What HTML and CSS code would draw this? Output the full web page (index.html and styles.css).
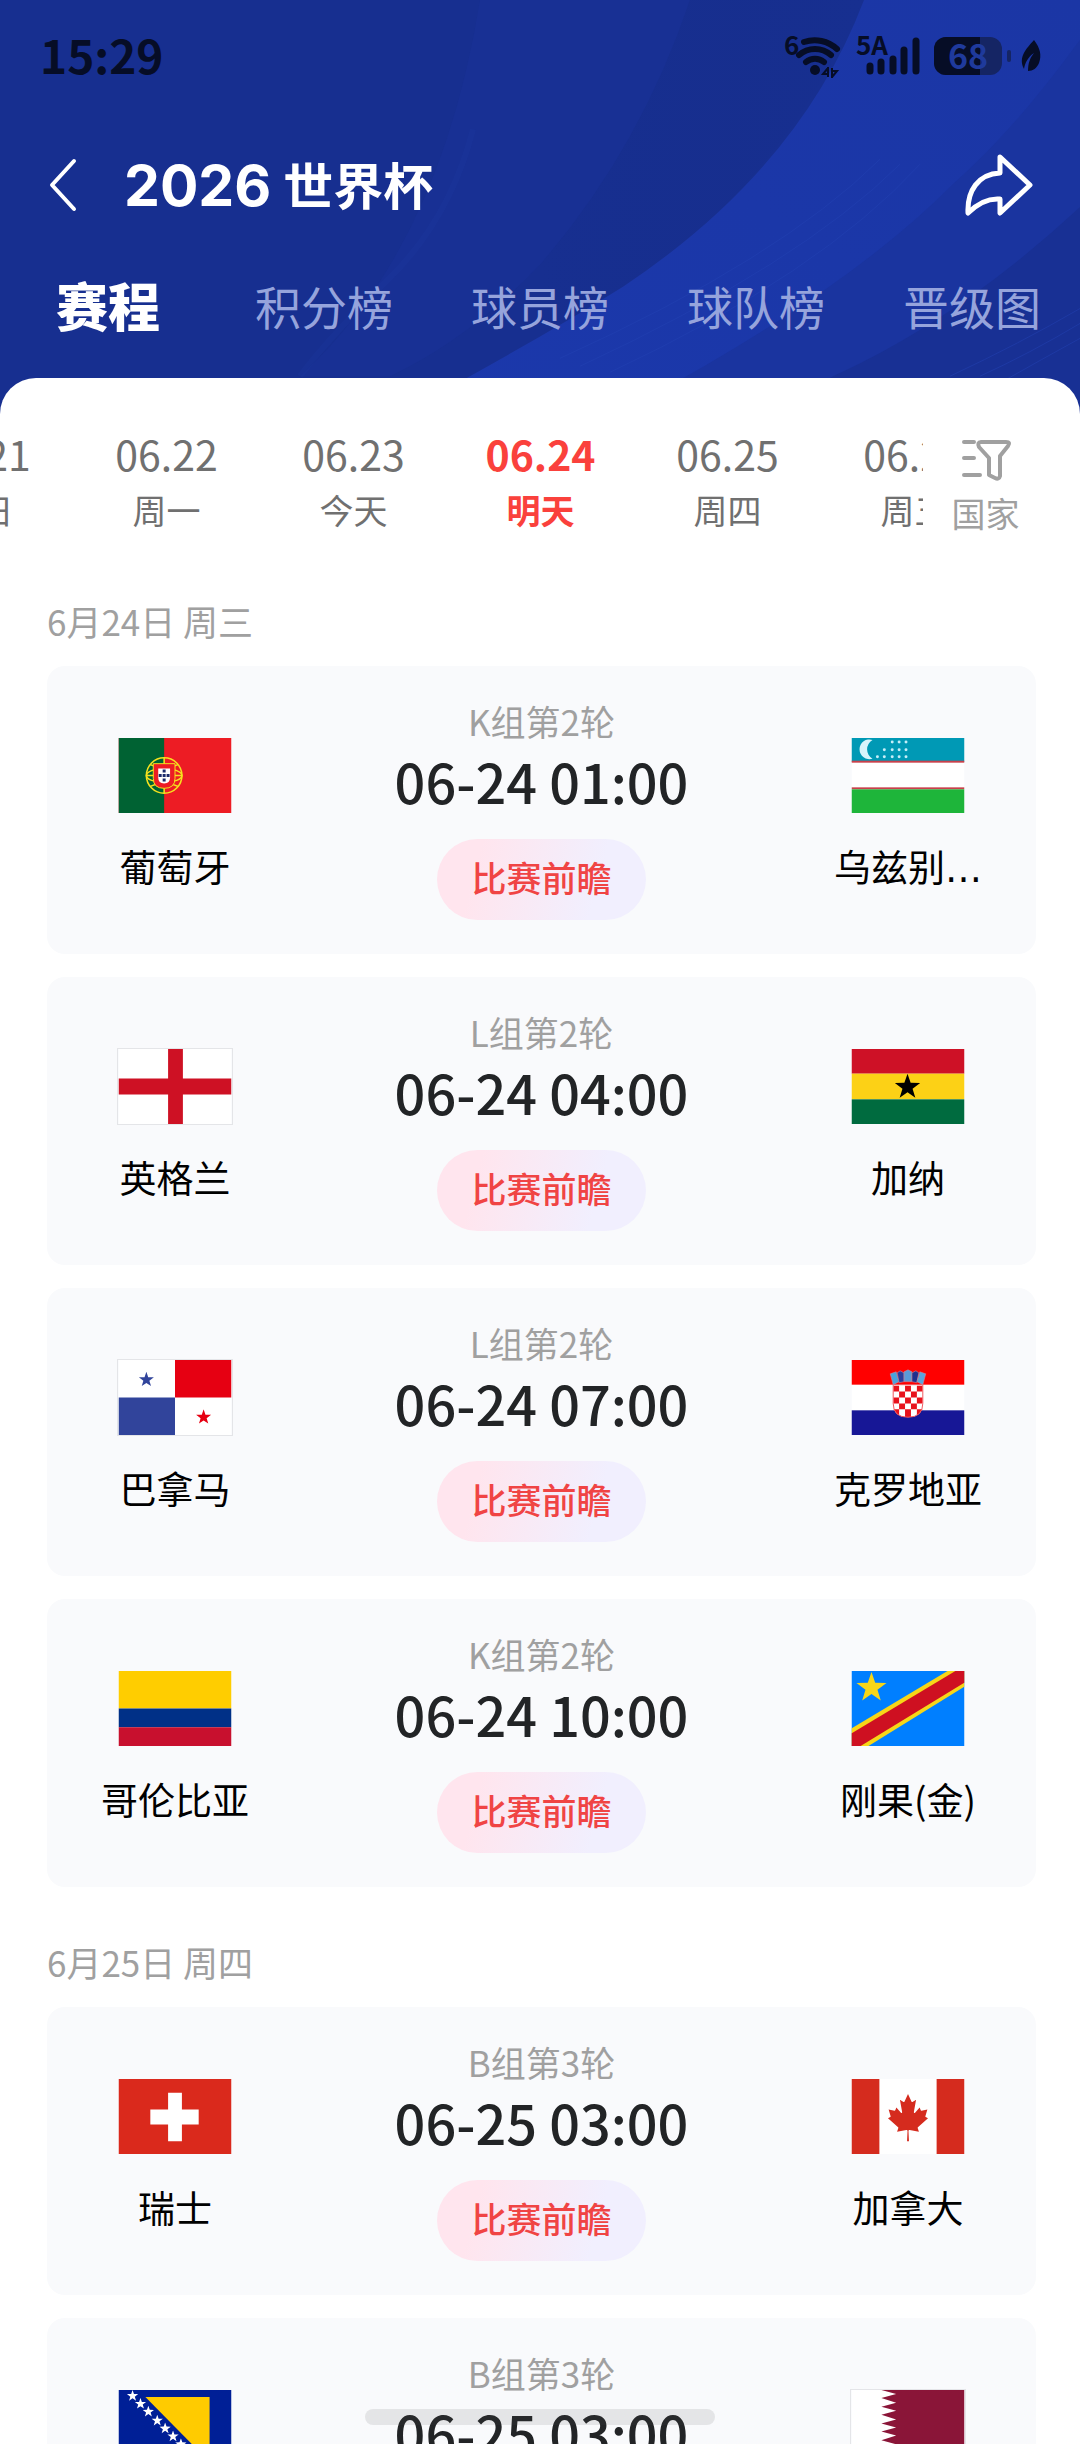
FILE: index.html
```
<!DOCTYPE html>
<html lang="zh-CN">
<head>
    <meta charset="UTF-8">
    <meta name="viewport" content="width=device-width, initial-scale=1.0">
    <title>2026 世界杯</title>
    <link rel="stylesheet" href="styles.css">
</head>
<body>
    <!-- Shared shapes -->
    <svg class="defs" width="0" height="0" aria-hidden="true">
        <symbol id="star" viewBox="-10 -10 20 20">
            <polygon points="0,-10 2.35,-3.24 9.51,-3.09 3.8,1.24 5.88,8.09 0,4 -5.88,8.09 -3.8,1.24 -9.51,-3.09 -2.35,-3.24"/>
        </symbol>
    </svg>

    <div class="app">
        <header class="header">
            <svg class="header-art" viewBox="0 0 1080 420" preserveAspectRatio="none" aria-hidden="true">
                <defs>
                    <linearGradient id="ribbon" x1="0" y1="1" x2="1" y2="0">
                        <stop offset="0" stop-color="#1b38ab"/>
                        <stop offset="1" stop-color="#1b36a5"/>
                    </linearGradient>
                    <linearGradient id="shade" x1="0" y1="0" x2="1" y2="0">
                        <stop offset="0" stop-color="#162d8a" stop-opacity="0"/>
                        <stop offset="1" stop-color="#172f90"/>
                    </linearGradient>
                </defs>
                <rect width="1080" height="420" fill="#172f90"/>
                <path d="M480 0H690Q640 150 540 266Q470 340 390 378H300Q440 250 480 0Z" fill="#1a3298" opacity=".5"/>
                <path d="M690 0Q640 150 540 266V345Q760 230 864 0Z" fill="url(#shade)"/>
                <path d="M473 130Q450 220 389 280T300 378" fill="none" stroke="#1e3ba6" stroke-width="6" opacity=".2"/>
                <path d="M864 0Q800 170 623 288Q540 340 430 400V420H1080V0Z" fill="url(#ribbon)"/>
                <path d="M1080 40Q1015 130 953 185Q850 290 640 404V420H1080Z" fill="#1a349f"/>
                <path d="M1080 208Q960 320 833 378L760 420H1080Z" fill="#183094"/>
                <g fill="none" stroke="#2342b4" stroke-width="1" opacity=".5">
                    <path d="M880 160Q780 260 560 360"/>
                    <path d="M900 165Q800 265 580 368"/>
                    <path d="M920 165Q820 275 610 374"/>
                    <path d="M1080 310Q1020 345 950 378"/>
                    <path d="M1080 325Q1030 355 980 378"/>
                    <path d="M1080 340Q1040 362 1005 382"/>
                </g>
            </svg>

            <div class="status-bar">
                <span class="status-time">15:29</span>
                <div class="status-icons">
                    <svg class="wifi" width="58" height="44" viewBox="0 0 58 44" role="img" aria-label="Wi-Fi 6">
                        <text x="0" y="20" class="status-mark">6</text>
                        <g fill="none" stroke="currentColor" stroke-width="6" stroke-linecap="round">
                            <path d="M20 7A33 33 0 0 1 53 14"/>
                            <path d="M15 20A24 24 0 0 1 47 20"/>
                            <path d="M22 27A14 14 0 0 1 40 27"/>
                        </g>
                        <circle cx="31" cy="35" r="5" fill="currentColor"/>
                        <path d="M44 32V42M44 33L39 39H44M48 43V33M48 42L53 36H48" fill="none" stroke="currentColor" stroke-width="2"/>
                    </svg>
                    <svg class="signal" width="64" height="44" viewBox="0 0 64 44" role="img" aria-label="5A">
                        <text x="0" y="20" class="status-mark">5A</text>
                        <g stroke="currentColor" stroke-width="7" stroke-linecap="round">
                            <path d="M14 31V36M25 27V36M37 24V36M48 15V36M60 6V36"/>
                        </g>
                    </svg>
                    <svg class="battery" width="78" height="44" viewBox="0 0 78 44" role="img" aria-label="68%">
                        <rect x="0" y="2" width="68" height="38" rx="12" fill="#152564"/>
                        <path d="M12 2H46V40H12A12 12 0 0 1 0 28V14A12 12 0 0 1 12 2Z" fill="currentColor"/>
                        <rect x="73" y="15" width="4" height="12" rx="2" fill="#152564"/>
                        <text x="34" y="34" text-anchor="middle" class="battery-level">68</text>
                    </svg>
                    <svg class="leaf" width="22" height="44" viewBox="0 0 22 44" aria-hidden="true">
                        <path d="M14 5C20 13 22 20 19 28C17 33 13 36 8 36C8 28 10 23 14 18C8 22 5 28 4 34C-2 22 6 14 14 5Z" fill="currentColor"/>
                    </svg>
                </div>
            </div>

            <div class="nav">
                <button class="icon-button" aria-label="返回">
                    <svg width="30" height="56" viewBox="0 0 30 56"><path d="M26 4L4 28L26 52" fill="none" stroke="#fff" stroke-width="4" stroke-linecap="round" stroke-linejoin="round"/></svg>
                </button>
                <h1 class="title"><span class="title-year">2026</span>世界杯</h1>
                <button class="icon-button share" aria-label="分享">
                    <svg width="70" height="64" viewBox="0 0 70 64"><path d="M36 4L66 32L36 60V46C24 45 14 50 4 60C3 38 14 21 36 20Z" fill="none" stroke="#fff" stroke-width="5" stroke-linejoin="round"/></svg>
                </button>
            </div>

            <nav class="tabs">
                <a class="tab active" href="#schedule">赛程</a>
                <a class="tab" href="#points">积分榜</a>
                <a class="tab" href="#players">球员榜</a>
                <a class="tab" href="#teams">球队榜</a>
                <a class="tab" href="#bracket">晋级图</a>
            </nav>
        </header>

        <main class="sheet" id="schedule">
            <div class="date-bar">
                <div class="date-strip">
                    <div class="dates">
                        <button class="date"><span>06.21</span><span class="weekday">周日</span></button>
                        <button class="date"><span>06.22</span><span class="weekday">周一</span></button>
                        <button class="date"><span>06.23</span><span class="weekday">今天</span></button>
                        <button class="date active"><span>06.24</span><span class="weekday">明天</span></button>
                        <button class="date"><span>06.25</span><span class="weekday">周四</span></button>
                        <button class="date"><span>06.26</span><span class="weekday">周五</span></button>
                    </div>
                </div>
                <button class="filter">
                    <svg width="52" height="44" viewBox="0 0 52 44" aria-hidden="true">
                        <g fill="none" stroke="#a0a0a0" stroke-width="4" stroke-linecap="round" stroke-linejoin="round">
                            <path d="M4 4H14M4 20H14M4 37H20"/>
                            <path d="M21 4H46Q51 4 48 8L40 18V38Q39 42 35 40L29 37V20L19 9Q17 4 21 4Z"/>
                        </g>
                    </svg>
                    <span>国家</span>
                </button>
            </div>

            <section class="day">
                <h2 class="day-title">6月24日 周三</h2>
                <div class="matches">
                    <article class="match">
                        <div class="team">
                            <svg class="flag" viewBox="0 0 114 76" aria-hidden="true">
                                <rect width="114" height="76" fill="#ed1c24"/>
                                <rect width="46" height="76" fill="#006233"/>
                                <g fill="none" stroke="#f5e11e" stroke-width="1.6">
                                    <circle cx="46" cy="38" r="18"/>
                                    <ellipse cx="46" cy="38" rx="18" ry="7"/>
                                    <path d="M46 20V56M28 38H64M32 27Q46 34 60 27M32 49Q46 42 60 49"/>
                                </g>
                                <path d="M35 26H57V41Q57 51 46 51T35 41Z" fill="#ed1c24" stroke="#f5e11e" stroke-width="1"/>
                                <path d="M40 31H52V40Q52 46 46 46T40 40Z" fill="#fff"/>
                                <path d="M44.5 32h3v3h-3zM44.5 36.5h3v3h-3zM44.5 41h3v3h-3zM40.5 36.5h3v3h-3zM48.5 36.5h3v3h-3z" fill="#1b2a6b"/>
                            </svg>
                            <span class="team-name">葡萄牙</span>
                        </div>
                        <div class="info">
                            <span class="round">K组第2轮</span>
                            <time class="kickoff">06-24 01:00</time>
                            <button class="preview">比赛前瞻</button>
                        </div>
                        <div class="team">
                            <svg class="flag" viewBox="0 0 114 76" aria-hidden="true">
                                <rect width="114" height="76" fill="#fff"/>
                                <rect width="114" height="24" fill="#0099b5"/>
                                <rect y="23" width="114" height="2" fill="#c8414b"/>
                                <rect y="50" width="114" height="2" fill="#c8414b"/>
                                <rect y="52" width="114" height="24" fill="#1eb53a"/>
                                <path d="M21 2A10 10 0 1 0 21 21A11 11 0 0 1 21 2Z" fill="#d8f4fb"/>
                                <g fill="#c6eef8">
                                    <circle cx="41" cy="4" r="1.5"/><circle cx="48" cy="4" r="1.5"/><circle cx="55" cy="4" r="1.5"/>
                                    <circle cx="33" cy="12" r="1.5"/><circle cx="41" cy="12" r="1.5"/><circle cx="48" cy="12" r="1.5"/><circle cx="55" cy="12" r="1.5"/>
                                    <circle cx="26" cy="19" r="1.5"/><circle cx="33" cy="19" r="1.5"/><circle cx="41" cy="19" r="1.5"/><circle cx="48" cy="19" r="1.5"/><circle cx="55" cy="19" r="1.5"/>
                                </g>
                            </svg>
                            <span class="team-name">乌兹别<span class="dots">…</span></span>
                        </div>
                    </article>

                    <article class="match">
                        <div class="team">
                            <svg class="flag bordered" viewBox="0 0 114 76" aria-hidden="true">
                                <rect width="114" height="76" fill="#fff"/>
                                <path d="M50 0H65V30H114V46H65V76H50V46H0V30H50Z" fill="#ce1124"/>
                            </svg>
                            <span class="team-name">英格兰</span>
                        </div>
                        <div class="info">
                            <span class="round">L组第2轮</span>
                            <time class="kickoff">06-24 04:00</time>
                            <button class="preview">比赛前瞻</button>
                        </div>
                        <div class="team">
                            <svg class="flag" viewBox="0 0 114 76" aria-hidden="true">
                                <rect width="114" height="25" fill="#ce1126"/>
                                <rect y="25" width="114" height="26" fill="#fcd116"/>
                                <rect y="51" width="114" height="25" fill="#006b3f"/>
                                <use href="#star" x="43" y="25" width="27" height="27" fill="#000"/>
                            </svg>
                            <span class="team-name">加纳</span>
                        </div>
                    </article>

                    <article class="match">
                        <div class="team">
                            <svg class="flag bordered" viewBox="0 0 114 76" aria-hidden="true">
                                <rect width="114" height="76" fill="#fff"/>
                                <rect x="57" width="57" height="38" fill="#e60012"/>
                                <rect y="38" width="57" height="38" fill="#31449b"/>
                                <use href="#star" x="20" y="12" width="16" height="16" fill="#31449b"/>
                                <use href="#star" x="78" y="50" width="16" height="16" fill="#e60012"/>
                            </svg>
                            <span class="team-name">巴拿马</span>
                        </div>
                        <div class="info">
                            <span class="round">L组第2轮</span>
                            <time class="kickoff">06-24 07:00</time>
                            <button class="preview">比赛前瞻</button>
                        </div>
                        <div class="team">
                            <svg class="flag" viewBox="0 0 114 76" aria-hidden="true">
                                <rect width="114" height="76" fill="#fff"/>
                                <rect width="114" height="25" fill="#f00"/>
                                <rect y="51" width="114" height="25" fill="#171796"/>
                                <clipPath id="shield"><path d="M42 25H72V44Q72 58 57 58T42 44Z"/></clipPath>
                                <g clip-path="url(#shield)">
                                    <rect x="42" y="25" width="30" height="34" fill="#fff"/>
                                    <path d="M42 26h6v6h-6zM54 26h6v6h-6zM66 26h6v6h-6zM48 32h6v6h-6zM60 32h6v6h-6zM42 38h6v6h-6zM54 38h6v6h-6zM66 38h6v6h-6zM48 44h6v6h-6zM60 44h6v6h-6zM42 50h6v6h-6zM54 50h6v8h-6zM66 50h6v6h-6z" fill="#e8121c"/>
                                </g>
                                <path d="M42 25H72V44Q72 58 57 58T42 44Z" fill="none" stroke="#f2555c" stroke-width="1"/>
                                <g stroke="#c9899a" stroke-width=".6">
                                    <path d="M39 14L45 12L48 22L42 25Z" fill="#4aa3dc"/>
                                    <path d="M46 13L49 11L53 13V22L48 23Z" fill="#2b3c9c"/>
                                    <path d="M53 12L57 10L61 12V22H53Z" fill="#5a9bd8"/>
                                    <path d="M61 13L65 11L68 13L66 23L61 22Z" fill="#1f2f8e"/>
                                    <path d="M69 12L75 14L72 25L66 22Z" fill="#5aa5dc"/>
                                </g>
                            </svg>
                            <span class="team-name">克罗地亚</span>
                        </div>
                    </article>

                    <article class="match">
                        <div class="team">
                            <svg class="flag" viewBox="0 0 114 76" aria-hidden="true">
                                <rect width="114" height="38" fill="#ffcd00"/>
                                <rect y="38" width="114" height="19" fill="#003087"/>
                                <rect y="57" width="114" height="19" fill="#c8102e"/>
                            </svg>
                            <span class="team-name">哥伦比亚</span>
                        </div>
                        <div class="info">
                            <span class="round">K组第2轮</span>
                            <time class="kickoff">06-24 10:00</time>
                            <button class="preview">比赛前瞻</button>
                        </div>
                        <div class="team">
                            <svg class="flag" viewBox="0 0 114 76" aria-hidden="true">
                                <rect width="114" height="76" fill="#007fff"/>
                                <path d="M0 58L97 0H114V16L17 76H0Z" fill="#f7d618"/>
                                <path d="M0 63L105 0H114V12L9 76H0Z" fill="#ce1021"/>
                                <use href="#star" x="4" y="1" width="32" height="32" fill="#f7d618"/>
                            </svg>
                            <span class="team-name">刚果(金)</span>
                        </div>
                    </article>
                </div>
            </section>

            <section class="day">
                <h2 class="day-title">6月25日 周四</h2>
                <div class="matches">
                    <article class="match">
                        <div class="team">
                            <svg class="flag" viewBox="0 0 114 76" aria-hidden="true">
                                <rect width="114" height="76" fill="#da291c"/>
                                <path d="M50 14H64V31H81V46H64V63H50V46H32V31H50Z" fill="#fff"/>
                            </svg>
                            <span class="team-name">瑞士</span>
                        </div>
                        <div class="info">
                            <span class="round">B组第3轮</span>
                            <time class="kickoff">06-25 03:00</time>
                            <button class="preview">比赛前瞻</button>
                        </div>
                        <div class="team">
                            <svg class="flag" viewBox="0 0 114 76" aria-hidden="true">
                                <rect width="114" height="76" fill="#fff"/>
                                <rect width="28" height="76" fill="#d52b1e"/>
                                <rect x="86" width="28" height="76" fill="#d52b1e"/>
                                <path transform="translate(57 39) scale(.0109 .0119)" d="m-90 2030 45-863a95 95 0 0 0-111-98l-859 151 116-320a65 65 0 0 0-20-73l-941-762 212-99a65 65 0 0 0 34-79l-186-572 542 115a65 65 0 0 0 73-38l105-247 423 454a65 65 0 0 0 111-57l-204-1052 327 189a65 65 0 0 0 91-27l332-652 332 652a65 65 0 0 0 91 27l327-189-204 1052a65 65 0 0 0 111 57l423-454 105 247a65 65 0 0 0 73 38l542-115-186 572a65 65 0 0 0 34 79l212 99-941 762a65 65 0 0 0-20 73l116 320-859-151a95 95 0 0 0-111 98l45 863z" fill="#d52b1e"/>
                            </svg>
                            <span class="team-name">加拿大</span>
                        </div>
                    </article>

                    <article class="match">
                        <div class="team">
                            <svg class="flag" viewBox="0 0 114 76" aria-hidden="true">
                                <rect width="114" height="76" fill="#001f96"/>
                                <path d="M27 7H92V73Z" fill="#ffcb00"/>
                                <g fill="#fff">
                                    <use href="#star" x="8" y="0" width="12" height="12"/>
                                    <use href="#star" x="16" y="8" width="12" height="12"/>
                                    <use href="#star" x="24" y="16" width="12" height="12"/>
                                    <use href="#star" x="33" y="25" width="12" height="12"/>
                                    <use href="#star" x="41" y="33" width="12" height="12"/>
                                    <use href="#star" x="49" y="41" width="12" height="12"/>
                                    <use href="#star" x="57" y="49" width="12" height="12"/>
                                    <use href="#star" x="66" y="58" width="12" height="12"/>
                                </g>
                            </svg>
                            <span class="team-name">波黑</span>
                        </div>
                        <div class="info">
                            <span class="round">B组第3轮</span>
                            <time class="kickoff">06-25 03:00</time>
                            <button class="preview">比赛前瞻</button>
                        </div>
                        <div class="team">
                            <svg class="flag bordered" viewBox="0 0 114 76" aria-hidden="true">
                                <rect width="114" height="76" fill="#fff"/>
                                <path d="M114 0H30L45 4L30 8L45 13L30 17L45 21L30 25L45 30L30 34L45 38L30 42L45 46L30 51L45 55L30 59L45 63L30 68L45 72L30 76H114Z" fill="#8a1538"/>
                            </svg>
                            <span class="team-name">卡塔尔</span>
                        </div>
                    </article>
                </div>
            </section>
        </main>

        <div class="home-indicator"></div>
    </div>
</body>
</html>
```

FILE: styles.css
```
* {
    box-sizing: border-box;
}

body {
    margin: 0;
    font-family: "Noto Sans CJK SC", sans-serif;
    background: #fff;
    color: #000;
}

button {
    margin: 0;
    padding: 0;
    border: none;
    background: none;
    font: inherit;
    color: inherit;
    cursor: pointer;
}

svg {
    display: block;
}

.defs {
    position: absolute;
}

.app {
    display: flex;
    flex-direction: column;
    height: 100vh;
    overflow: hidden;
}

/* Header */
.header {
    position: relative;
    flex: none;
    padding-bottom: 66px;
    background: #172f90;
}

.header-art {
    position: absolute;
    inset: 0;
    width: 100%;
    height: 100%;
}

.status-bar,
.nav,
.tabs {
    position: relative;
    display: flex;
    align-items: center;
}

.status-bar {
    justify-content: space-between;
    height: 112px;
    padding: 0 38px 0 40px;
    color: #060d26;
}

.status-time {
    padding-bottom: 4px;
    font-size: 46px;
    font-weight: 700;
    line-height: 60px;
}

.status-icons {
    display: flex;
    align-items: center;
    gap: 14px;
    padding-top: 2px;
}

.status-icons svg {
    overflow: visible;
}

.status-mark {
    font-size: 26px;
    font-weight: 700;
    fill: currentColor;
}

.battery-level {
    font-size: 34px;
    font-weight: 700;
    fill: #1f3a9c;
}

.leaf {
    margin-left: -6px;
}

.nav {
    height: 146px;
    padding: 0 46px 0 48px;
}

.icon-button {
    flex: none;
}

.share {
    margin-left: auto;
}

.title {
    display: flex;
    align-items: center;
    gap: 12px;
    margin: 0 0 4px 46px;
    font-size: 50px;
    font-weight: 700;
    line-height: 60px;
    color: #fff;
}

.title-year {
    padding-top: 6px;
    font-family: Inter, sans-serif;
    font-size: 57px;
}

.tabs {
    height: 94px;
}

.tab {
    flex: 1;
    font-size: 46px;
    line-height: 60px;
    text-align: center;
    text-decoration: none;
    color: #96a4dc;
}

.tab.active {
    font-size: 52px;
    font-weight: 900;
    color: #fff;
}

/* Sheet */
.sheet {
    position: relative;
    flex: 1;
    min-height: 0;
    margin-top: -40px;
    padding-top: 50px;
    border-radius: 36px 36px 0 0;
    background: #fff;
    overflow: hidden;
}

.date-bar {
    display: flex;
    margin-bottom: 60px;
}

.date-strip {
    flex: 1;
    min-width: 0;
    overflow: hidden;
}

.dates {
    display: flex;
    margin-left: -114px;
}

.date {
    display: flex;
    flex: 0 0 187px;
    flex-direction: column;
    align-items: center;
    gap: 7px;
    font-size: 41px;
    line-height: 50px;
    color: #707070;
}

.weekday {
    font-size: 34px;
}

.date.active {
    font-weight: 700;
    color: #fa413c;
}

.filter {
    display: flex;
    flex: 0 0 157px;
    flex-direction: column;
    align-items: center;
    gap: 6px;
    padding: 10px 32px 0 0;
    font-size: 34px;
    line-height: 50px;
    color: #a0a0a0;
}

.day {
    margin-bottom: 52px;
    padding: 0 44px 0 47px;
}

.day-title {
    margin: 0 0 22px;
    font-size: 35px;
    font-weight: 400;
    line-height: 46px;
    color: #a0a0a0;
}

.matches {
    display: flex;
    flex-direction: column;
    gap: 23px;
}

.match {
    display: flex;
    padding: 31px 0 34px;
    border-radius: 18px;
    background: #f9fafc;
}

.team {
    display: flex;
    flex: 0 0 256px;
    flex-direction: column;
    align-items: center;
    gap: 28px;
    padding-top: 41px;
}

.flag {
    width: 114px;
    height: 75px;
}

.flag.bordered {
    outline: 1px solid #e4e5e8;
}

.team-name {
    font-size: 37px;
    line-height: 50px;
}

.dots {
    font-family: "DejaVu Sans", sans-serif;
}

.info {
    display: flex;
    flex: 1;
    flex-direction: column;
    align-items: center;
}

.round {
    font-size: 35px;
    line-height: 48px;
    color: #a0a0a0;
}

.kickoff {
    font-size: 54px;
    font-weight: 500;
    line-height: 72px;
    color: #222426;
}

.preview {
    margin-top: 22px;
    padding: 0 34px 6px;
    border-radius: 41px;
    background: linear-gradient(105deg, #ffe5ee 20%, #f1effe 75%);
    font-size: 35px;
    font-weight: 500;
    line-height: 75px;
    color: #f04444;
}

.home-indicator {
    position: fixed;
    bottom: 19px;
    left: 50%;
    width: 350px;
    height: 16px;
    margin-left: -175px;
    border-radius: 8px;
    background: rgba(80, 80, 80, 0.12);
}
```
